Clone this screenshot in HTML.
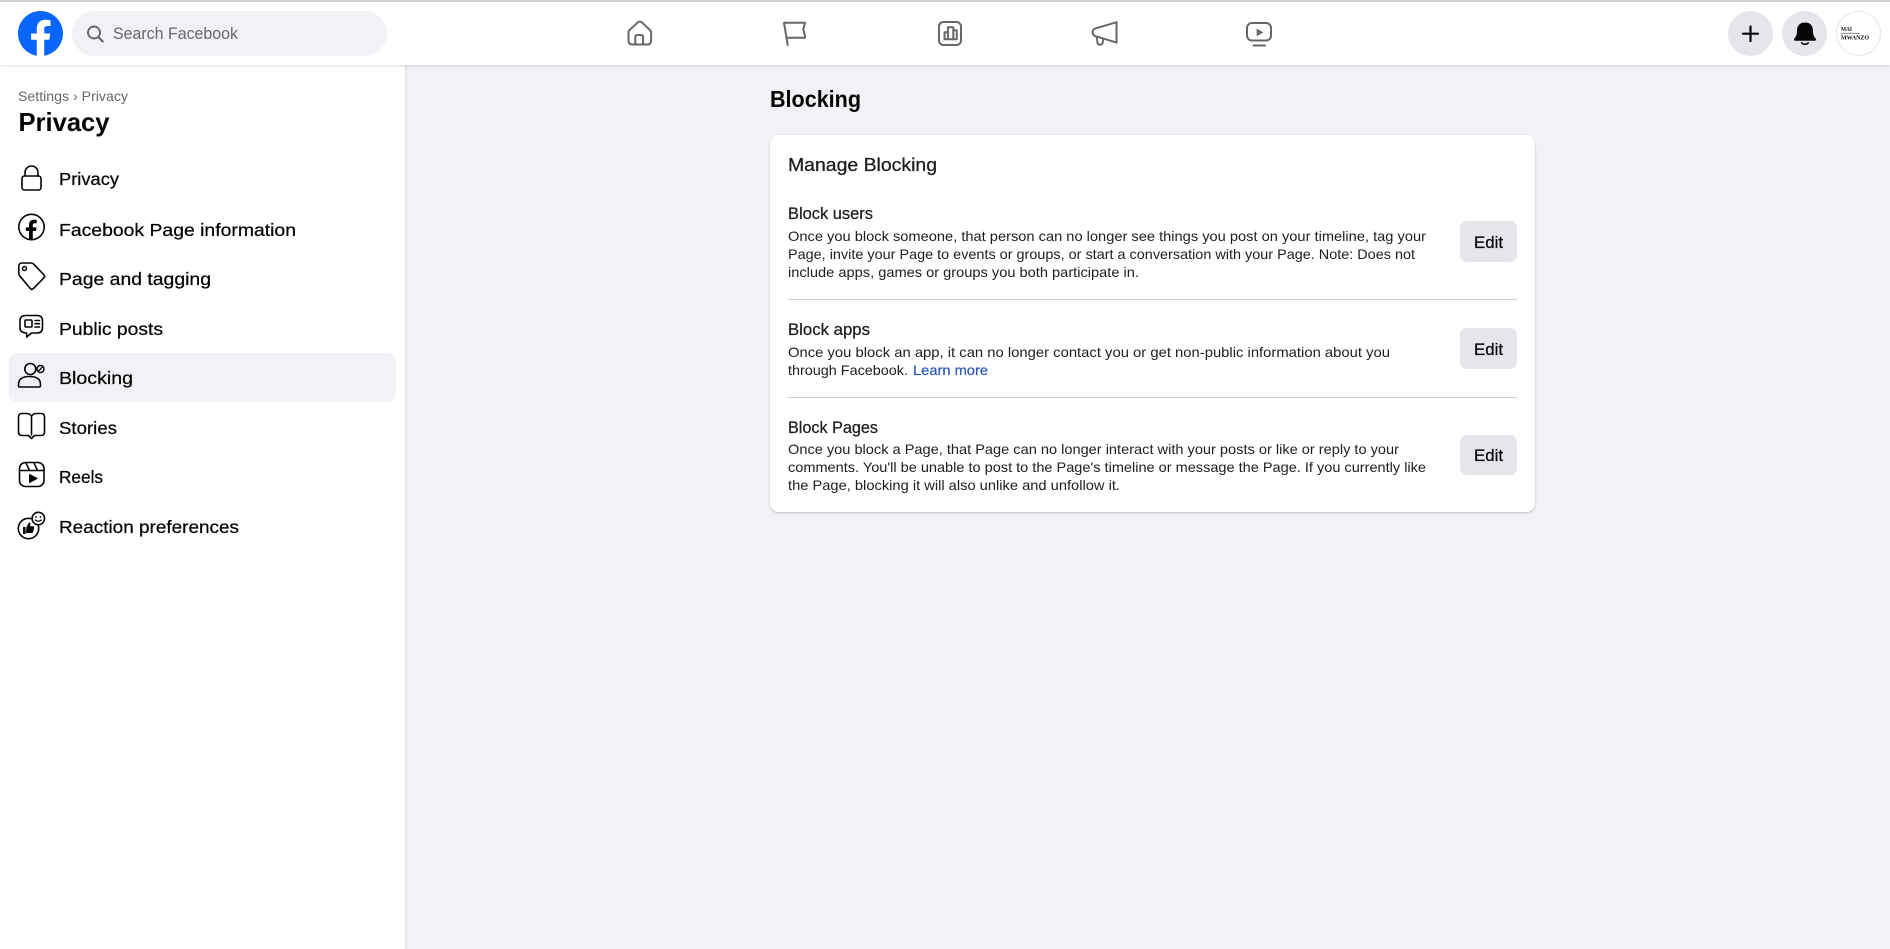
<!DOCTYPE html>
<html lang="en">
<head>
<meta charset="utf-8">
<title>Privacy - Blocking</title>
<style>
html,body{margin:0;padding:0;width:1890px;height:949px;overflow:hidden;background:#f0f2f5;font-family:"Liberation Sans",sans-serif}
.abs{position:absolute}
#side{left:0;top:65px;width:405px;height:884px;background:#fff;box-shadow:1px 0 3px rgba(0,0,0,.09)}
#head{left:0;top:0;width:1890px;height:65px;background:#fff;box-shadow:0 1px 3px rgba(0,0,0,.14);box-sizing:border-box;border-top:2px solid #d2d2d2}
#search{left:72px;top:11px;width:315px;height:45px;border-radius:23px;background:#f0f2f5}
.round{top:11px;width:45px;height:45px;border-radius:50%;background:#e4e6eb}
#active{left:9px;top:353px;width:387px;height:49px;border-radius:8px;background:#f0f2f5}
#card{left:770px;top:135px;width:765px;height:377px;border-radius:9px;background:#fff;box-shadow:0 1px 2px rgba(0,0,0,.22)}
.rule{left:788px;width:729px;height:1px;background:#ced0d4}
.btn{left:1460px;width:57px;border-radius:7px;background:#e4e6eb}
svg{position:absolute;left:0;top:0}
text{font-family:"Liberation Sans",sans-serif}
.m{fill:#050505;font-size:17.8px;stroke:#050505;stroke-width:.25px}
.t{fill:#1c1e21;font-size:16.5px;stroke:#1c1e21;stroke-width:.25px}
.p{fill:#1c1e21;font-size:14px}
.e{fill:#050505;font-size:16.5px;stroke:#050505;stroke-width:.25px}
.ni{fill:none;stroke:#65676b;stroke-width:2;stroke-linejoin:round;stroke-linecap:round}
.si{fill:none;stroke:#050505;stroke-width:1.6;stroke-linejoin:round;stroke-linecap:round}
</style>
</head>
<body>
<div id="side" class="abs"></div>
<div id="head" class="abs"></div>
<div id="search" class="abs"></div>
<div class="abs round" style="left:1728px"></div>
<div class="abs round" style="left:1782px"></div>
<div class="abs round" style="left:1836px;background:#fff;box-shadow:inset 0 0 0 1px #e4e6eb"></div>
<div id="active" class="abs"></div>
<div id="card" class="abs"></div>
<div class="abs rule" style="top:299px"></div>
<div class="abs rule" style="top:397px"></div>
<div class="abs btn" style="top:221px;height:41px"></div>
<div class="abs btn" style="top:328px;height:41px"></div>
<div class="abs btn" style="top:435px;height:40px"></div>

<svg width="1890" height="949" viewBox="0 0 1890 949" xmlns="http://www.w3.org/2000/svg">
  <!-- logo -->
  <g transform="translate(18 11) scale(1.25)">
    <path fill="#0866ff" d="M15 35.8C6.5 34.3 0 26.9 0 18 0 8.1 8.1 0 18 0s18 8.1 18 18c0 8.9-6.5 16.3-15 17.8l-1-.8h-4l-1 .8z"/>
    <path fill="#fff" d="M25 23l.8-5H21v-3.500c0-1.400.5-2.500 2.700-2.500H26V7.400c-1.300-.2-2.700-.4-4-.4-4.100 0-7 2.500-7 7v4h-4.500v5H15v12.700c1 .2 2 .3 3 .3s2-.1 3-.3V23h4z"/>
  </g>
  <!-- search -->
  <circle cx="94" cy="32.500" r="6" fill="none" stroke="#65676b" stroke-width="1.900"/>
  <path d="M98.400 37l4.300 4.500" stroke="#65676b" stroke-width="2.100" stroke-linecap="round"/>
  <text x="113" y="39" font-size="16.500" fill="#65676b" textLength="125" lengthAdjust="spacingAndGlyphs">Search Facebook</text>

  <!-- nav: home -->
  <path class="ni" d="M629.300 30.300l8.500-8q2-1.600 4 0l8.500 8q.8.900.8 2.200v8q0 4-4 4h-14.600q-4 0-4-4v-8q0-1.300.8-2.200z"/>
  <path class="ni" d="M635.300 44.500v-7.300q0-2.200 2.200-2.200h3.400q2.200 0 2.200 2.200v7.300"/>
  <!-- nav: flag -->
  <path class="ni" d="M787.700 45l-3.700-22.300h21l-1.700 6.600 1.700 6.700v1.700h-18.200"/>
  <!-- nav: chart -->
  <rect class="ni" x="939" y="22" width="22" height="23" rx="4.500"/>
  <path class="ni" stroke-width="1.800" d="M944.500 39.300v-7h3.400v7zM947.900 39.300V27.200h5.400v12.100zM953.300 39.300v-9h3.400v9z"/>
  <!-- nav: megaphone -->
  <path class="ni" d="M1116.500 22.200v20.400l-18.300-5.700q-5.600-.9-5.600-4.700 0-3.600 5.600-4.500z"/>
  <path class="ni" d="M1096.800 37l.7 6q.2 1.700 2.500 1.700 2.300 0 2.600-1.700l.8-4.200"/>
  <!-- nav: video -->
  <rect class="ni" x="1247" y="23" width="24" height="17.500" rx="5"/>
  <path d="M1256.700 28.500l6.600 3.900-6.600 3.900z" fill="#65676b"/>
  <path d="M1253.500 45.500h11.500" stroke="#65676b" stroke-width="2" stroke-linecap="round"/>

  <!-- right -->
  <path d="M1750.500 26.500v14.500M1743 33.700h15" stroke="#050505" stroke-width="2.200" stroke-linecap="round"/>
  <path fill="#050505" d="M1805 22.500c-5.800 0-8 3.800-8 8.500 0 3.800-1 5.700-2.500 7.200-.9 1-.5 2.600 1.200 2.600h18.600c1.700 0 2.100-1.600 1.200-2.600-1.500-1.500-2.500-3.400-2.500-7.200 0-4.700-2.200-8.500-8-8.500z"/>
  <path d="M1801.500 42.200a3.600 2.600 0 0 0 7 0" fill="none" stroke="#050505" stroke-width="1.600"/>
  <text x="1841" y="31" font-weight="700" font-size="6.500" fill="#111" style="font-family:'Liberation Serif',serif" textLength="11" lengthAdjust="spacingAndGlyphs">MAI</text>
  <path d="M1841 33.300h19" stroke="#777" stroke-width=".8"/>
  <text x="1841" y="39.500" font-weight="700" font-size="6.500" fill="#111" style="font-family:'Liberation Serif',serif" textLength="28" lengthAdjust="spacingAndGlyphs">MWANZO</text>

  <!-- sidebar head -->
  <text x="18" y="101" font-size="14" fill="#65676b" textLength="110" lengthAdjust="spacingAndGlyphs">Settings › Privacy</text>
  <text x="18.500" y="131" font-size="26" font-weight="700" fill="#050505" textLength="91" lengthAdjust="spacingAndGlyphs">Privacy</text>

  <!-- sidebar icons -->
  <rect class="si" x="22" y="176" width="19" height="14" rx="2.500"/>
  <path class="si" d="M25 176v-3.500a6.500 6.500 0 0 1 13 0v3.500"/>

  <circle class="si" cx="31.500" cy="227" r="12.700"/>
  <path fill="#050505" d="M29 240v-9h-3.200v-3.600H29v-2.700c0-3.300 2-5 4.800-5 1.300 0 2.500.1 2.900.2v3.300h-2c-1.500 0-1.900.8-1.900 1.900v2.300h3.700l-.5 3.600h-3.200v9z"/>

  <path class="si" d="M18.800 267.500v5.600q0 1.800 1.300 3.200l10.300 12.300q1.500 1.500 3 0l10.500-10.800q1.400-1.600 0-3l-10-10.500q-1.400-1.300-3.200-1.300h-8.500q-3.400 0-3.400 3.500z"/>
  <circle cx="24.500" cy="268.500" r="2" fill="none" stroke="#050505" stroke-width="1.400"/>

  <path class="si" d="M26 315.500h11q5.500 0 5.500 5.500v6.500q0 5.500-5.500 5.500h-5.500l-4.800 4v-4q-6.700 0-6.700-5.500v-6.500q0-5.500 5.500-5.500z"/>
  <rect class="si" x="25" y="320" width="7" height="7" rx="1" stroke-width="1.400"/>
  <path class="si" stroke-width="1.300" d="M35 320.500h4.500M35 323.700h4.500M35 327h4.500"/>

  <circle class="si" cx="30.300" cy="369" r="5.500"/>
  <path class="si" d="M18.500 385.500q0 1.500 1.500 1.500h19q1.500 0 1.500-1.500v-1q0-8-11-8t-11 8z"/>
  <circle cx="40.500" cy="369" r="3.500" fill="none" stroke="#050505" stroke-width="1.400"/>
  <path d="M38 371.500l5-5" stroke="#050505" stroke-width="1.300"/>

  <path class="si" d="M31.500 416.500q-1-3-5-3h-4.500q-3.500 0-3.500 3.500v15q0 3.500 3.500 3.500h6.500l3 3 3-3h6.500q3.500 0 3.500-3.500v-15q0-3.500-3.500-3.500h-4.500q-4 0-5 3zv18.500"/>

  <rect class="si" x="19.500" y="462.500" width="24.500" height="24" rx="6"/>
  <path class="si" stroke-width="1.500" d="M19.500 470.500h24.500M26 463l3.500 7.500M34 463l3.500 7.500"/>
  <path d="M29.500 474.500l7.500 4-7.500 4z" fill="#050505" stroke="#050505" stroke-width="1" stroke-linejoin="round"/>

  <circle class="si" cx="28.500" cy="528.500" r="10.200"/>
  <path fill="#050505" d="M23 527h2.600v7H23zM26.500 527l2.500-4.500c1.500 0 1.800 1.200 1.400 2.600l-.3 1.100h3c1 0 1.400 1 1.100 1.800l-1.200 4c-.2.700-.7 1-1.300 1h-5.800z"/>
  <circle cx="38.300" cy="518.500" r="6.200" fill="#fff" stroke="#050505" stroke-width="1.600"/>
  <circle cx="36" cy="517" r=".9" fill="#050505"/><circle cx="40.500" cy="517" r=".9" fill="#050505"/>
  <path d="M35.300 520q3 2.600 6 0" fill="none" stroke="#050505" stroke-width="1.200" stroke-linecap="round"/>

  <!-- sidebar labels -->
  <text class="m" x="59" y="185" textLength="60" lengthAdjust="spacingAndGlyphs">Privacy</text>
  <text class="m" x="59" y="236" textLength="237" lengthAdjust="spacingAndGlyphs">Facebook Page information</text>
  <text class="m" x="59" y="285" textLength="152" lengthAdjust="spacingAndGlyphs">Page and tagging</text>
  <text class="m" x="59" y="335" textLength="104" lengthAdjust="spacingAndGlyphs">Public posts</text>
  <text class="m" x="59" y="384" textLength="74" lengthAdjust="spacingAndGlyphs">Blocking</text>
  <text class="m" x="59" y="434" textLength="58" lengthAdjust="spacingAndGlyphs">Stories</text>
  <text class="m" x="59" y="483" textLength="44" lengthAdjust="spacingAndGlyphs">Reels</text>
  <text class="m" x="59" y="533" textLength="180" lengthAdjust="spacingAndGlyphs">Reaction preferences</text>

  <!-- main -->
  <text x="770" y="107" font-size="23" font-weight="700" fill="#050505" textLength="91" lengthAdjust="spacingAndGlyphs">Blocking</text>
  <text x="788" y="171" font-size="18.500" fill="#1c1e21" stroke="#1c1e21" stroke-width=".3" textLength="149" lengthAdjust="spacingAndGlyphs">Manage Blocking</text>

  <text class="t" x="788" y="219" textLength="85" lengthAdjust="spacingAndGlyphs">Block users</text>
  <text class="p" x="788" y="241" textLength="638" lengthAdjust="spacingAndGlyphs">Once you block someone, that person can no longer see things you post on your timeline, tag your</text>
  <text class="p" x="788" y="259" textLength="627" lengthAdjust="spacingAndGlyphs">Page, invite your Page to events or groups, or start a conversation with your Page. Note: Does not</text>
  <text class="p" x="788" y="277" textLength="351" lengthAdjust="spacingAndGlyphs">include apps, games or groups you both participate in.</text>
  <text class="e" x="1474" y="248" textLength="29" lengthAdjust="spacingAndGlyphs">Edit</text>

  <text class="t" x="788" y="335" textLength="82" lengthAdjust="spacingAndGlyphs">Block apps</text>
  <text class="p" x="788" y="357" textLength="602" lengthAdjust="spacingAndGlyphs">Once you block an app, it can no longer contact you or get non-public information about you</text>
  <text class="p" x="788" y="375" textLength="120" lengthAdjust="spacingAndGlyphs">through Facebook.</text>
  <text x="913" y="375" font-size="14" fill="#2a57b8" stroke="#2a57b8" stroke-width=".2" textLength="75" lengthAdjust="spacingAndGlyphs">Learn more</text>
  <text class="e" x="1474" y="355" textLength="29" lengthAdjust="spacingAndGlyphs">Edit</text>

  <text class="t" x="788" y="433" textLength="90" lengthAdjust="spacingAndGlyphs">Block Pages</text>
  <text class="p" x="788" y="454" textLength="611" lengthAdjust="spacingAndGlyphs">Once you block a Page, that Page can no longer interact with your posts or like or reply to your</text>
  <text class="p" x="788" y="472" textLength="638" lengthAdjust="spacingAndGlyphs">comments. You'll be unable to post to the Page's timeline or message the Page. If you currently like</text>
  <text class="p" x="788" y="490" textLength="332" lengthAdjust="spacingAndGlyphs">the Page, blocking it will also unlike and unfollow it.</text>
  <text class="e" x="1474" y="461" textLength="29" lengthAdjust="spacingAndGlyphs">Edit</text>
</svg>
</body>
</html>
